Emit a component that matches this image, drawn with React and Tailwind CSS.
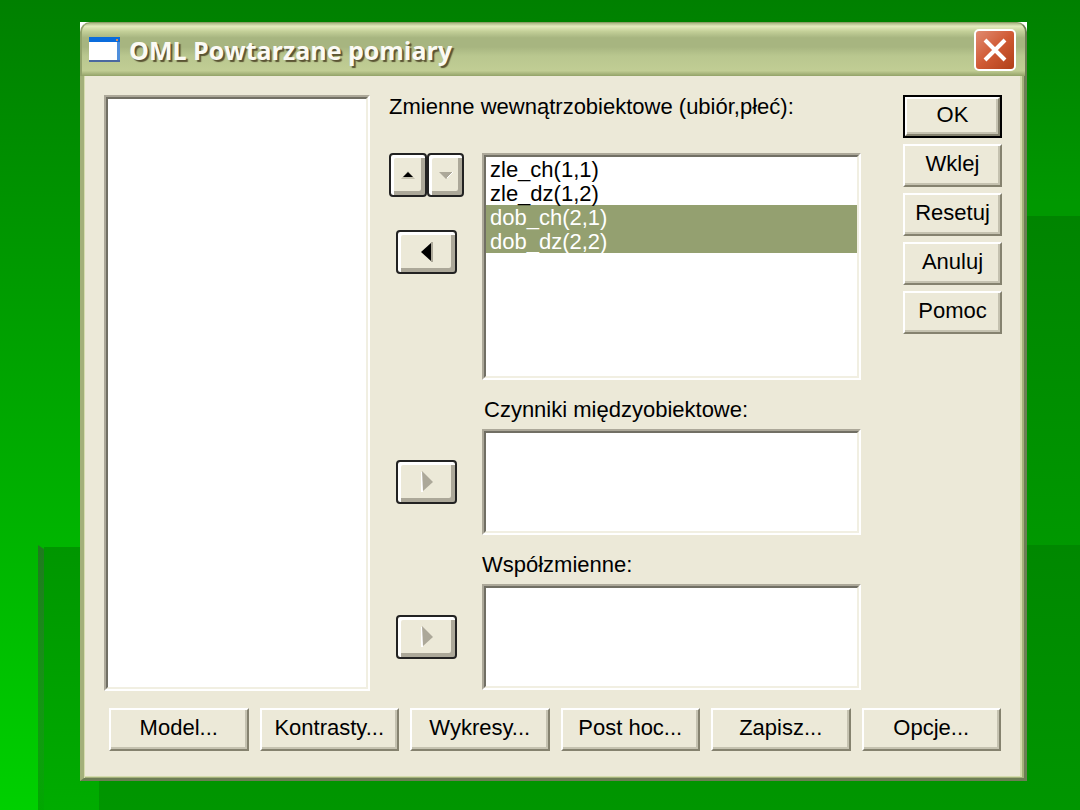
import React, { useState } from "react";

const sideButtons = ["Wklej", "Resetuj", "Anuluj", "Pomoc"];
const bottomButtons = ["Model...", "Kontrasty...", "Wykresy...", "Post hoc...", "Zapisz...", "Opcje..."];
const withinVariables = ["zle_ch(1,1)", "zle_dz(1,2)", "dob_ch(2,1)", "dob_dz(2,2)"];

function Backdrop() {
  return (
    <div aria-hidden="true" className="absolute inset-0 overflow-hidden bg-linear-to-b from-[#008000] to-[#00d000]">
      <div className="absolute inset-y-0 left-1/2 right-0 bg-linear-to-b from-[#008000] via-[#009800] via-25% to-[#009800]" />
      <div className="absolute top-[216px] bottom-0 left-1/2 right-0 bg-linear-to-b from-[#008400] to-[#00a800]" />
      <div className="absolute top-[545px] bottom-0 left-[38px] w-[6px] bg-linear-to-b from-[#1f7a1f] to-[#00a800] [clip-path:polygon(0_0,100%_4px,100%_100%,0_100%)]" />
      <div className="absolute top-[547px] bottom-0 left-[44px] right-0 bg-linear-to-b from-[#009600] to-[#00ac00]" />
      <div className="absolute top-[545px] bottom-0 left-[99px] right-0 bg-linear-to-b from-[#008800] to-[#009600]" />
    </div>
  );
}

function Button({ children, primary }) {
  return (
    <div className={`flex h-[43px] ${primary ? "border-2 border-black" : ""}`}>
      <button
        type="button"
        className="flex flex-1 items-center justify-center border-2 border-t-white border-l-white border-r-[#85826f] border-b-[#85826f] bg-[#ece9d8] pb-1 shadow-[inset_-2px_-2px_0_#c5c2b0]"
      >
        {children}
      </button>
    </div>
  );
}

function ArrowButton({ label, disabled, className, children }) {
  return (
    <button
      type="button"
      aria-label={label}
      disabled={disabled}
      className={`h-[44px] rounded-[4px] border-2 border-[#222] bg-[#ece9d8] shadow-[inset_3px_3px_0_#fff,inset_-4px_-4px_0_#aca899] flex items-center justify-center ${className}`}
    >
      {children}
    </button>
  );
}

function ListBox({ id, label, className = "", children, ...props }) {
  return (
    <div className={`flex border-2 border-t-[#aca899] border-l-[#aca899] border-r-white border-b-white ${className}`}>
      <select
        id={id}
        aria-label={label}
        multiple
        className="w-full appearance-none overflow-hidden rounded-none border-2 border-t-[#716f64] border-l-[#716f64] border-r-[#f1efe2] border-b-[#f1efe2] bg-white p-0 outline-none"
        {...props}
      >
        {children}
      </select>
    </div>
  );
}

function RightArrow() {
  return (
    <svg width="14" height="22" viewBox="0 0 14 22">
      <path d="M2 1V21" stroke="#fff" strokeWidth="2" />
      <path d="M2 0L13 11L3 20Z" fill="#aca899" />
    </svg>
  );
}

export default function App() {
  const [selected, setSelected] = useState(["dob_ch(2,1)", "dob_dz(2,2)"]);

  const handleSelect = (e) => {
    setSelected(Array.from(e.target.selectedOptions, (o) => o.value));
  };

  return (
    <div className="relative min-h-screen flex pt-[22px] pb-[29px] pl-[80px] pr-[53px] font-['Liberation_Sans',Arial,sans-serif] text-[22px] leading-[24px] text-black">
      <Backdrop />

      <div className="relative flex-1 flex flex-col bg-white">
        <header className="h-[54px] rounded-t-[10px] flex items-center pl-[7px] pr-[9px] border-l-2 border-r-2 border-t border-t-[#8f9f68] border-l-[#93a26c] border-r-[#6d7d52] bg-[linear-gradient(to_bottom,#a9b583_0%,#e3ebbd_6%,#c3cf98_16%,#a7b580_28%,#a7b580_45%,#b9c78f_62%,#c1cd94_90%,#93a268_100%)]">
          <svg width="32" height="26" viewBox="0 0 32 26" className="shrink-0" aria-hidden="true">
            <rect width="31" height="25" fill="#4f8fdc" />
            <rect width="31" height="5" fill="#0a6cdc" />
            <rect x="27" y="2" width="2" height="2" fill="#d98a5a" />
            <rect y="5" width="28" height="18" fill="#fff" />
            <rect y="23" width="31" height="2" fill="#4a68a0" />
          </svg>
          <h1 className="ml-2 flex-1 font-['Open_Sans',sans-serif] text-[25px] font-bold text-[#fbfaf4] [text-shadow:2px_2px_1px_#5a5434]">
            OML Powtarzane pomiary
          </h1>
          <button
            type="button"
            aria-label="Zamknij"
            className="size-[42px] rounded-[5px] border-2 border-white bg-linear-to-br from-[#e08a70] via-[#d05a34] to-[#b04018] flex items-center justify-center"
          >
            <svg width="24" height="24" viewBox="0 0 24 24">
              <path d="M2 2L22 22M22 2L2 22" stroke="#fff" strokeWidth="4" />
            </svg>
          </button>
        </header>

        <div className="flex-1 flex flex-col bg-[#ece9d8] border-l-[4px] border-r-[3px] border-b-[3px] border-l-[#a3b07a] border-r-[#6d7d55] border-b-[#6d7d55] shadow-[inset_1px_0_0_#d5dcae,inset_-2px_-1px_0_#a3b07a,inset_-4px_-2px_0_#d5dcae] pt-[19px] pl-[20px] pr-[22px] pb-[27px]">
          <div className="flex-1 flex">
            <ListBox label="Zmienne" className="w-[266px]" />

            <div className="ml-[19px] flex-1 flex flex-col">
              <label htmlFor="within" className="mb-[34px]">
                Zmienne wewnątrzobiektowe (ubiór,płeć):
              </label>
              <div className="flex">
                <div className="w-[93px]">
                  <div className="flex">
                    <ArrowButton label="W górę" className="w-[38px]">
                      <svg width="14" height="8" viewBox="0 0 14 8" className="shrink-0">
                        <path d="M0 8L7 0L14 8Z" fill="#c5c2b0" />
                        <path d="M2 6L7 1L12 6Z" fill="#000" />
                      </svg>
                    </ArrowButton>
                    <ArrowButton label="W dół" disabled className="w-[37px]">
                      <svg width="14" height="8" viewBox="0 0 14 8" className="shrink-0">
                        <path d="M0 1L7 8L14 1Z" fill="#aca899" />
                        <path d="M8 7L14 1" stroke="#fff" />
                      </svg>
                    </ArrowButton>
                  </div>
                  <ArrowButton label="Usuń" className="ml-[7px] mt-[33px] w-[61px]">
                    <svg width="12" height="20" viewBox="0 0 12 20">
                      <path d="M11 0V20" stroke="#aca899" strokeWidth="2" />
                      <path d="M0 10L10 1V19Z" fill="#000" />
                    </svg>
                  </ArrowButton>
                </div>
                <ListBox id="within" className="h-[227px] flex-1" value={selected} onChange={handleSelect}>
                  {withinVariables.map((name) => (
                    <option
                      key={name}
                      value={name}
                      className="h-[24px] min-h-0 p-0 pl-1 leading-[24px] checked:bg-[#94a070] checked:bg-[linear-gradient(#94a070,#94a070)] checked:text-white"
                    >
                      {name}
                    </option>
                  ))}
                </ListBox>
              </div>

              <label htmlFor="between" className="ml-[95px] mt-[18px] mb-[7px]">
                Czynniki międzyobiektowe:
              </label>
              <div className="flex items-center">
                <div className="w-[93px] pl-[7px]">
                  <ArrowButton label="Dodaj czynnik" disabled className="w-[61px]">
                    <RightArrow />
                  </ArrowButton>
                </div>
                <ListBox id="between" className="h-[106px] flex-1" />
              </div>

              <label htmlFor="covariates" className="ml-[93px] mt-[18px] mb-[7px]">
                Współzmienne:
              </label>
              <div className="flex items-center">
                <div className="w-[93px] pl-[7px]">
                  <ArrowButton label="Dodaj współzmienną" disabled className="w-[61px]">
                    <RightArrow />
                  </ArrowButton>
                </div>
                <ListBox id="covariates" className="h-[106px] flex-1" />
              </div>
            </div>

            <div className="ml-[42px] w-[99px] flex flex-col gap-[6px]">
              <Button primary>OK</Button>
              {sideButtons.map((name) => (
                <Button key={name}>{name}</Button>
              ))}
            </div>
          </div>

          <div className="mt-[17px] ml-[5px] mr-[1px] grid grid-cols-6 gap-[11px]">
            {bottomButtons.map((name) => (
              <Button key={name}>{name}</Button>
            ))}
          </div>
        </div>
      </div>
    </div>
  );
}
